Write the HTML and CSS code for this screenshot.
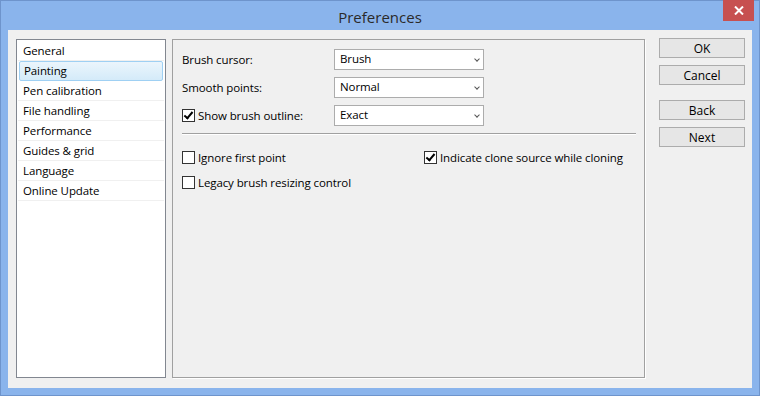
FILE: index.html
```html
<!DOCTYPE html>
<html lang="en">
<head>
    <meta charset="UTF-8">
    <title>Preferences</title>
    <link rel="stylesheet" href="styles.css">
</head>
<body>
    <div class="window">
        <div class="titlebar">
            <span class="title">Preferences</span>
            <button class="close-btn">
                <svg width="10" height="9" viewBox="0 0 10 9"><path d="M1 0.5 L9 8.5 M9 0.5 L1 8.5" stroke="#fff" stroke-width="2"/></svg>
            </button>
        </div>

        <div class="client">
            <!-- categories -->
            <ul class="nav">
                <li>General</li>
                <li class="selected">Painting</li>
                <li>Pen calibration</li>
                <li>File handling</li>
                <li>Performance</li>
                <li>Guides &amp; grid</li>
                <li>Language</li>
                <li>Online Update</li>
            </ul>

            <!-- settings -->
            <div class="panel">
                <div class="form-row">
                    <span class="label">Brush cursor:</span>
                    <div class="select">Brush<span class="chevron"></span></div>
                </div>
                <div class="form-row">
                    <span class="label">Smooth points:</span>
                    <div class="select">Normal<span class="chevron"></span></div>
                </div>
                <div class="form-row">
                    <label class="label check"><span class="box checked"></span>Show brush outline:</label>
                    <div class="select">Exact<span class="chevron"></span></div>
                </div>

                <div class="separator"></div>

                <div class="check-grid">
                    <label class="check"><span class="box"></span>Ignore first point</label>
                    <label class="check"><span class="box checked"></span>Indicate clone source while cloning</label>
                    <label class="check"><span class="box"></span>Legacy brush resizing control</label>
                </div>
            </div>

            <!-- dialog buttons -->
            <div class="buttons">
                <button class="btn">OK</button>
                <button class="btn">Cancel</button>
                <button class="btn gap">Back</button>
                <button class="btn">Next</button>
            </div>
        </div>
    </div>
</body>
</html>
```

FILE: styles.css
```css
/* dialog window */
body {
    margin: 0;
    font-family: 'Open Sans', 'Noto Sans', sans-serif;
    font-size: 11.5px;
    letter-spacing: -0.1px;
    color: #000;
}

.window {
    width: 760px;
    height: 396px;
    box-sizing: border-box;
    background-color: #8ab4ec;
    border: 1px solid #6e94cc;
    padding: 0 7px 7px;
    display: flex;
    flex-direction: column;
}

.titlebar {
    height: 29px;
    display: flex;
    justify-content: center;
    align-items: center;
    position: relative;
}

.title {
    font-size: 15px;
    letter-spacing: 0;
    color: #2a2a2a;
    margin-top: 3px;
}

.close-btn {
    position: absolute;
    top: -1px;
    right: -2px;
    width: 31px;
    height: 21px;
    border: none;
    padding: 0;
    background-color: #c75050;
    display: flex;
    align-items: center;
    justify-content: center;
}

.client {
    flex: 1;
    background-color: #f0f0f0;
    display: flex;
    padding: 9px 7px 10px 8px;
}

/* --- category list --- */
.nav {
    list-style: none;
    margin: 0;
    width: 150px;
    box-sizing: border-box;
    background-color: #fff;
    border: 1px solid #828790;
    padding: 1px;
}

.nav li {
    height: 20px;
    line-height: 19px;
    padding-left: 5px;
    border-bottom: 1px solid #f0f0f0;
    box-sizing: border-box;
}

.nav li.selected {
    background: linear-gradient(#ebf5fc, #d4ebf9);
    border: 1px solid #9fd0f3;
    border-radius: 2px;
    padding-left: 4px;
    line-height: 18px;
    margin: 0 1px;
}

/* --- settings panel --- */
.panel {
    width: 473px;
    box-sizing: border-box;
    margin-left: 6px;
    border: 1px solid #a0a0a0;
    box-shadow: 1px 1px 0 #fff;
    padding: 9px 8px 0 9px;
}

.form-row {
    display: flex;
    align-items: center;
    height: 21px;
    margin-bottom: 7px;
}

.label {
    width: 152px;
    flex-shrink: 0;
}

.select {
    width: 150px;
    height: 21px;
    box-sizing: border-box;
    background-color: #fff;
    border: 1px solid #acacac;
    padding-left: 5px;
    line-height: 18px;
    position: relative;
}

.chevron {
    position: absolute;
    right: 4px;
    top: 7px;
    width: 3px;
    height: 3px;
    border-right: 1.5px solid #555;
    border-bottom: 1.5px solid #555;
    transform: rotate(45deg);
}

.separator {
    height: 1px;
    background-color: #a0a0a0;
    border-bottom: 1px solid #fff;
    margin: 4px 0 12px;
}

.check {
    display: flex;
    align-items: center;
    height: 20px;
}

.box {
    width: 13px;
    height: 13px;
    box-sizing: border-box;
    border: 1px solid #333;
    background-color: #fff;
    margin-right: 3px;
    position: relative;
}

.box.checked::after {
    content: '';
    position: absolute;
    left: 3px;
    top: 0px;
    width: 3px;
    height: 7px;
    border-right: 2px solid #000;
    border-bottom: 2px solid #000;
    transform: rotate(40deg);
}

.check-grid {
    display: grid;
    grid-template-columns: 242px auto;
    row-gap: 5px;
}

/* --- buttons --- */
.buttons {
    width: 86px;
    margin-left: 14px;
    margin-top: -1px;
    display: flex;
    flex-direction: column;
}

.btn {
    height: 20px;
    margin-bottom: 7px;
    font-family: inherit;
    font-size: 12px;
    background-color: #e6e6e6;
    border: 1px solid #acacac;
    padding: 0;
}

.btn.gap {
    margin-top: 8px;
}
```
